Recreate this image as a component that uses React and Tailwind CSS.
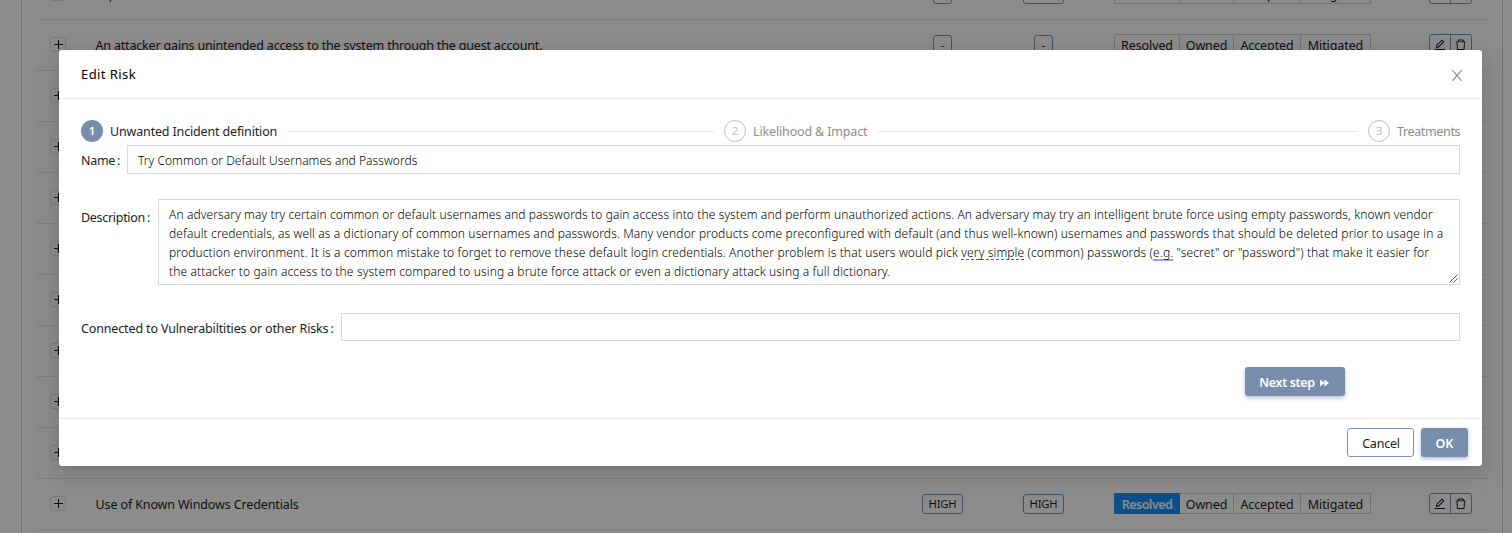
import React from "react";
import { AiOutlineEdit, AiOutlineDelete } from "react-icons/ai";

const rows = [
  { name: "Exploit of weak credentials", likelihood: "-", impact: "HIGH" },
  {
    name: "An attacker gains unintended access to the system through the guest account.",
    likelihood: "-",
    impact: "-",
    tight: true,
  },
  null,
  null,
  null,
  null,
  null,
  null,
  null,
  null,
  { name: "Use of Known Windows Credentials", likelihood: "HIGH", impact: "HIGH", resolved: true },
  null,
];

function Tag({ children }) {
  return (
    <span
      className={
        "flex h-5 items-center justify-center rounded-[3px] border border-[#7b94b5] pl-px text-[11.2px] leading-none tracking-[-0.1px] " +
        (children === "-" ? "w-[19px]" : "w-[41px]")
      }
    >
      {children}
    </span>
  );
}

function Row({ row }) {
  return (
    <div className="flex h-[51px] shrink-0 items-center border-b border-[#e8e8e8]">
      <div className="flex w-[59.5px] shrink-0 pb-0.5 pl-3.5">
        <span className="flex h-[15px] w-4 items-center justify-center rounded-[3px] border border-[#e0e0e0]">
          <svg viewBox="0 0 9 9" className="size-[9px]" stroke="#111" strokeWidth="1.1">
            <path d="M4.5 0v9M0 4.5h9" />
          </svg>
        </span>
      </div>
      {row && (
        <>
          <div
            className={
              "w-[796px] shrink-0 whitespace-nowrap pt-[3px] " + (row.tight ? "tracking-[-0.175px]" : "tracking-[-0.12px]")
            }
          >
            {row.name}
          </div>
          <div className="flex w-[101px] shrink-0 justify-center"><Tag>{row.likelihood}</Tag></div>
          <div className="flex w-[101px] shrink-0 justify-center"><Tag>{row.impact}</Tag></div>
          <div className="mb-px ml-[20.5px] flex h-[21px] shrink-0 border border-[#d0d0d0] leading-[21px] tracking-[-0.1px]">
            <span
              className={
                row.resolved
                  ? "-my-px -ml-px w-[66px] bg-[#1890ff] pt-px text-center font-semibold tracking-[-0.5px] text-white"
                  : "w-[65px] border-r border-[#d0d0d0] text-center"
              }
            >
              Resolved
            </span>
            <span className="w-[54px] border-r border-[#d0d0d0] text-center">Owned</span>
            <span className="w-[67px] border-r border-[#d0d0d0] text-center">Accepted</span>
            <span className="w-[69px] text-center">Mitigated</span>
          </div>
          <div className="mb-px ml-[58px] flex h-[21px] w-[43px] shrink-0 rounded-[3px] border border-[#7b94b5] text-[13.5px]">
            <span className="flex w-[21px] items-center justify-center border-r border-[#7b94b5]"><AiOutlineEdit /></span>
            <span className="flex flex-1 items-center justify-center"><AiOutlineDelete /></span>
          </div>
        </>
      )}
    </div>
  );
}

function Step({ n, active, className, children }) {
  return (
    <div className={"flex shrink-0 items-center whitespace-nowrap " + className + (active ? "" : " text-[#8c8c8c]")}>
      <span
        className={
          "mr-[7px] flex size-[22px] shrink-0 items-center justify-center rounded-full text-[11.5px] leading-none " +
          (active ? "bg-[#788dab] font-semibold text-white" : "border border-[#bfbfbf] text-[#bfbfbf]")
        }
      >
        {n}
      </span>
      <span className="pt-[3px]">{children}</span>
    </div>
  );
}

export default function App() {
  return (
    <div className="grid h-[533px] w-[1512px] overflow-hidden bg-white font-['Noto_Sans',sans-serif] text-[12.5px] text-[#1c1c1c]">
      <div className="col-start-1 row-start-1 flex h-[533px] overflow-hidden pl-[21px] pr-[9px]">
        <div className="flex flex-1 flex-col border-x border-[#d0d0d0] px-3.5">
          <div className="-mt-[31px] flex flex-col">
            {rows.map((r, i) => <Row key={i} row={r} />)}
          </div>
        </div>
      </div>
      <div className="relative z-10 col-start-1 row-start-1 flex h-[533px] bg-black/45 pl-[59px] pt-[50px]">
        <div className="flex h-[416px] w-[1423px] flex-col rounded-[3px] bg-white shadow-[0_3px_6px_-4px_rgba(0,0,0,0.12),0_6px_16px_0_rgba(0,0,0,0.08),0_9px_28px_8px_rgba(0,0,0,0.05)]">
          <div className="flex h-[49px] shrink-0 items-center justify-between border-b border-[#ebebeb] pl-[22px] pr-5">
            <span className="pt-px text-[13px] tracking-[0.42px] text-black">Edit Risk</span>
            <svg viewBox="0 0 10 11" className="mt-[3px] h-[11px] w-2.5" stroke="#808080" strokeWidth="1.1" fill="none">
              <path d="M0.4 0.2L9.6 10.8M9.6 0.2L0.4 10.8" />
            </svg>
          </div>
          <div className="flex h-[320px] shrink-0 flex-col border-b border-[#ebebeb] px-[22px] pt-[21px]">
            <div className="flex h-[22px] items-center">
              <Step n="1" active className="w-[196px] tracking-[-0.16px]">Unwanted Incident definition</Step>
              <span className="mx-2.5 h-px w-[427px] bg-[#e8e8e8]" />
              <Step n="2" className="w-[144px] tracking-[-0.15px]">Likelihood &amp; Impact</Step>
              <span className="mx-2.5 h-px flex-1 bg-[#e8e8e8]" />
              <Step n="3" className="w-[92px] tracking-[-0.36px]">Treatments</Step>
            </div>
            <div className="mt-[3px] flex h-[29px] items-center">
              <span className="w-[46px] shrink-0 pt-[3px] tracking-[-0.3px]">Name<span className="ml-[2px]">:</span></span>
              <span className="flex h-full flex-1 items-center border border-[#d9d9d9] pl-2.5 pt-0.5 text-[12px] font-light tracking-[0.05px] text-black">
                Try Common or Default Usernames and Passwords
              </span>
            </div>
            <div className="mt-[25px] flex h-[86px]">
              <span className="w-[77px] shrink-0 pt-2.5 tracking-[-0.3px]">Description<span className="ml-[2px]">:</span></span>
              <div className="relative flex flex-1 items-end border border-[#d9d9d9] pb-[3px] pl-2.5">
                <div className="w-[1280px] whitespace-nowrap text-[12px] font-light leading-[19px] text-black">
                  <div className="tracking-[0.108px]">
                    An adversary may try certain common or default usernames and passwords to gain access into the system and perform unauthorized actions. An adversary may try an intelligent brute force using empty passwords, known vendor
                  </div>
                  <div className="tracking-[0.12px]">
                    default credentials, as well as a dictionary of common usernames and passwords. Many vendor products come preconfigured with default (and thus well-known) usernames and passwords that should be deleted prior to usage in a
                  </div>
                  <div className="tracking-[0.135px]">
                    production environment. It is a common mistake to forget to remove these default login credentials. Another problem is that users would pick{" "}
                    <span className="underline decoration-[#5b4bd6] decoration-dashed decoration-1 underline-offset-2 [text-decoration-skip-ink:none]">very simple</span>
                    {" (common) passwords ("}
                    <span className="underline decoration-[#8ea2f8] decoration-2 underline-offset-2 [text-decoration-skip-ink:none]">e.g.</span>
                    {' "secret" or "password") that make it easier for'}
                  </div>
                  <div className="tracking-[0.134px]">
                    the attacker to gain access to the system compared to using a brute force attack or even a dictionary attack using a full dictionary.
                  </div>
                </div>
                <svg viewBox="0 0 9 9" className="absolute bottom-px right-px size-[9px]" stroke="#555" strokeWidth="1">
                  <path d="M0.5 8.5L8.5 0.5M4.5 8.5L8.5 4.5" />
                </svg>
              </div>
            </div>
            <div className="mt-7 flex h-7 items-center">
              <span className="w-[260px] shrink-0 whitespace-nowrap pt-[5px] tracking-[-0.14px]">
                Connected to Vulnerabiltities or other Risks<span className="ml-[2px]">:</span>
              </span>
              <span className="h-full flex-1 border border-[#d9d9d9]" />
            </div>
            <div className="mt-[26px] flex justify-end pr-[115px]">
              <button className="flex h-[29px] w-[100px] items-center justify-center gap-[5px] rounded-[3px] bg-[#788dab] pt-0.5 font-semibold text-white shadow-[0_2px_4px_rgba(90,110,150,0.45)]">
                <span className="pt-px tracking-[-0.33px]">Next step</span>
                <svg viewBox="0 0 9 8" className="mr-0.5 h-2 w-[9px]" fill="#fff">
                  <path d="M0 0.5L4.6 4L0 7.5ZM4.4 0.5L9 4L4.4 7.5Z" />
                </svg>
              </button>
            </div>
          </div>
          <div className="flex flex-1 items-center justify-end gap-[7px] pr-3.5">
            <button className="h-[29px] w-[67px] rounded-[3px] border border-[#7b94b5] pl-px pt-[3px] tracking-[-0.2px]">Cancel</button>
            <button className="h-[29px] w-[47px] rounded-[3px] bg-[#788dab] pt-[3px] font-semibold text-white shadow-[0_2px_4px_rgba(90,110,150,0.45)]">OK</button>
          </div>
        </div>
      </div>
    </div>
  );
}
